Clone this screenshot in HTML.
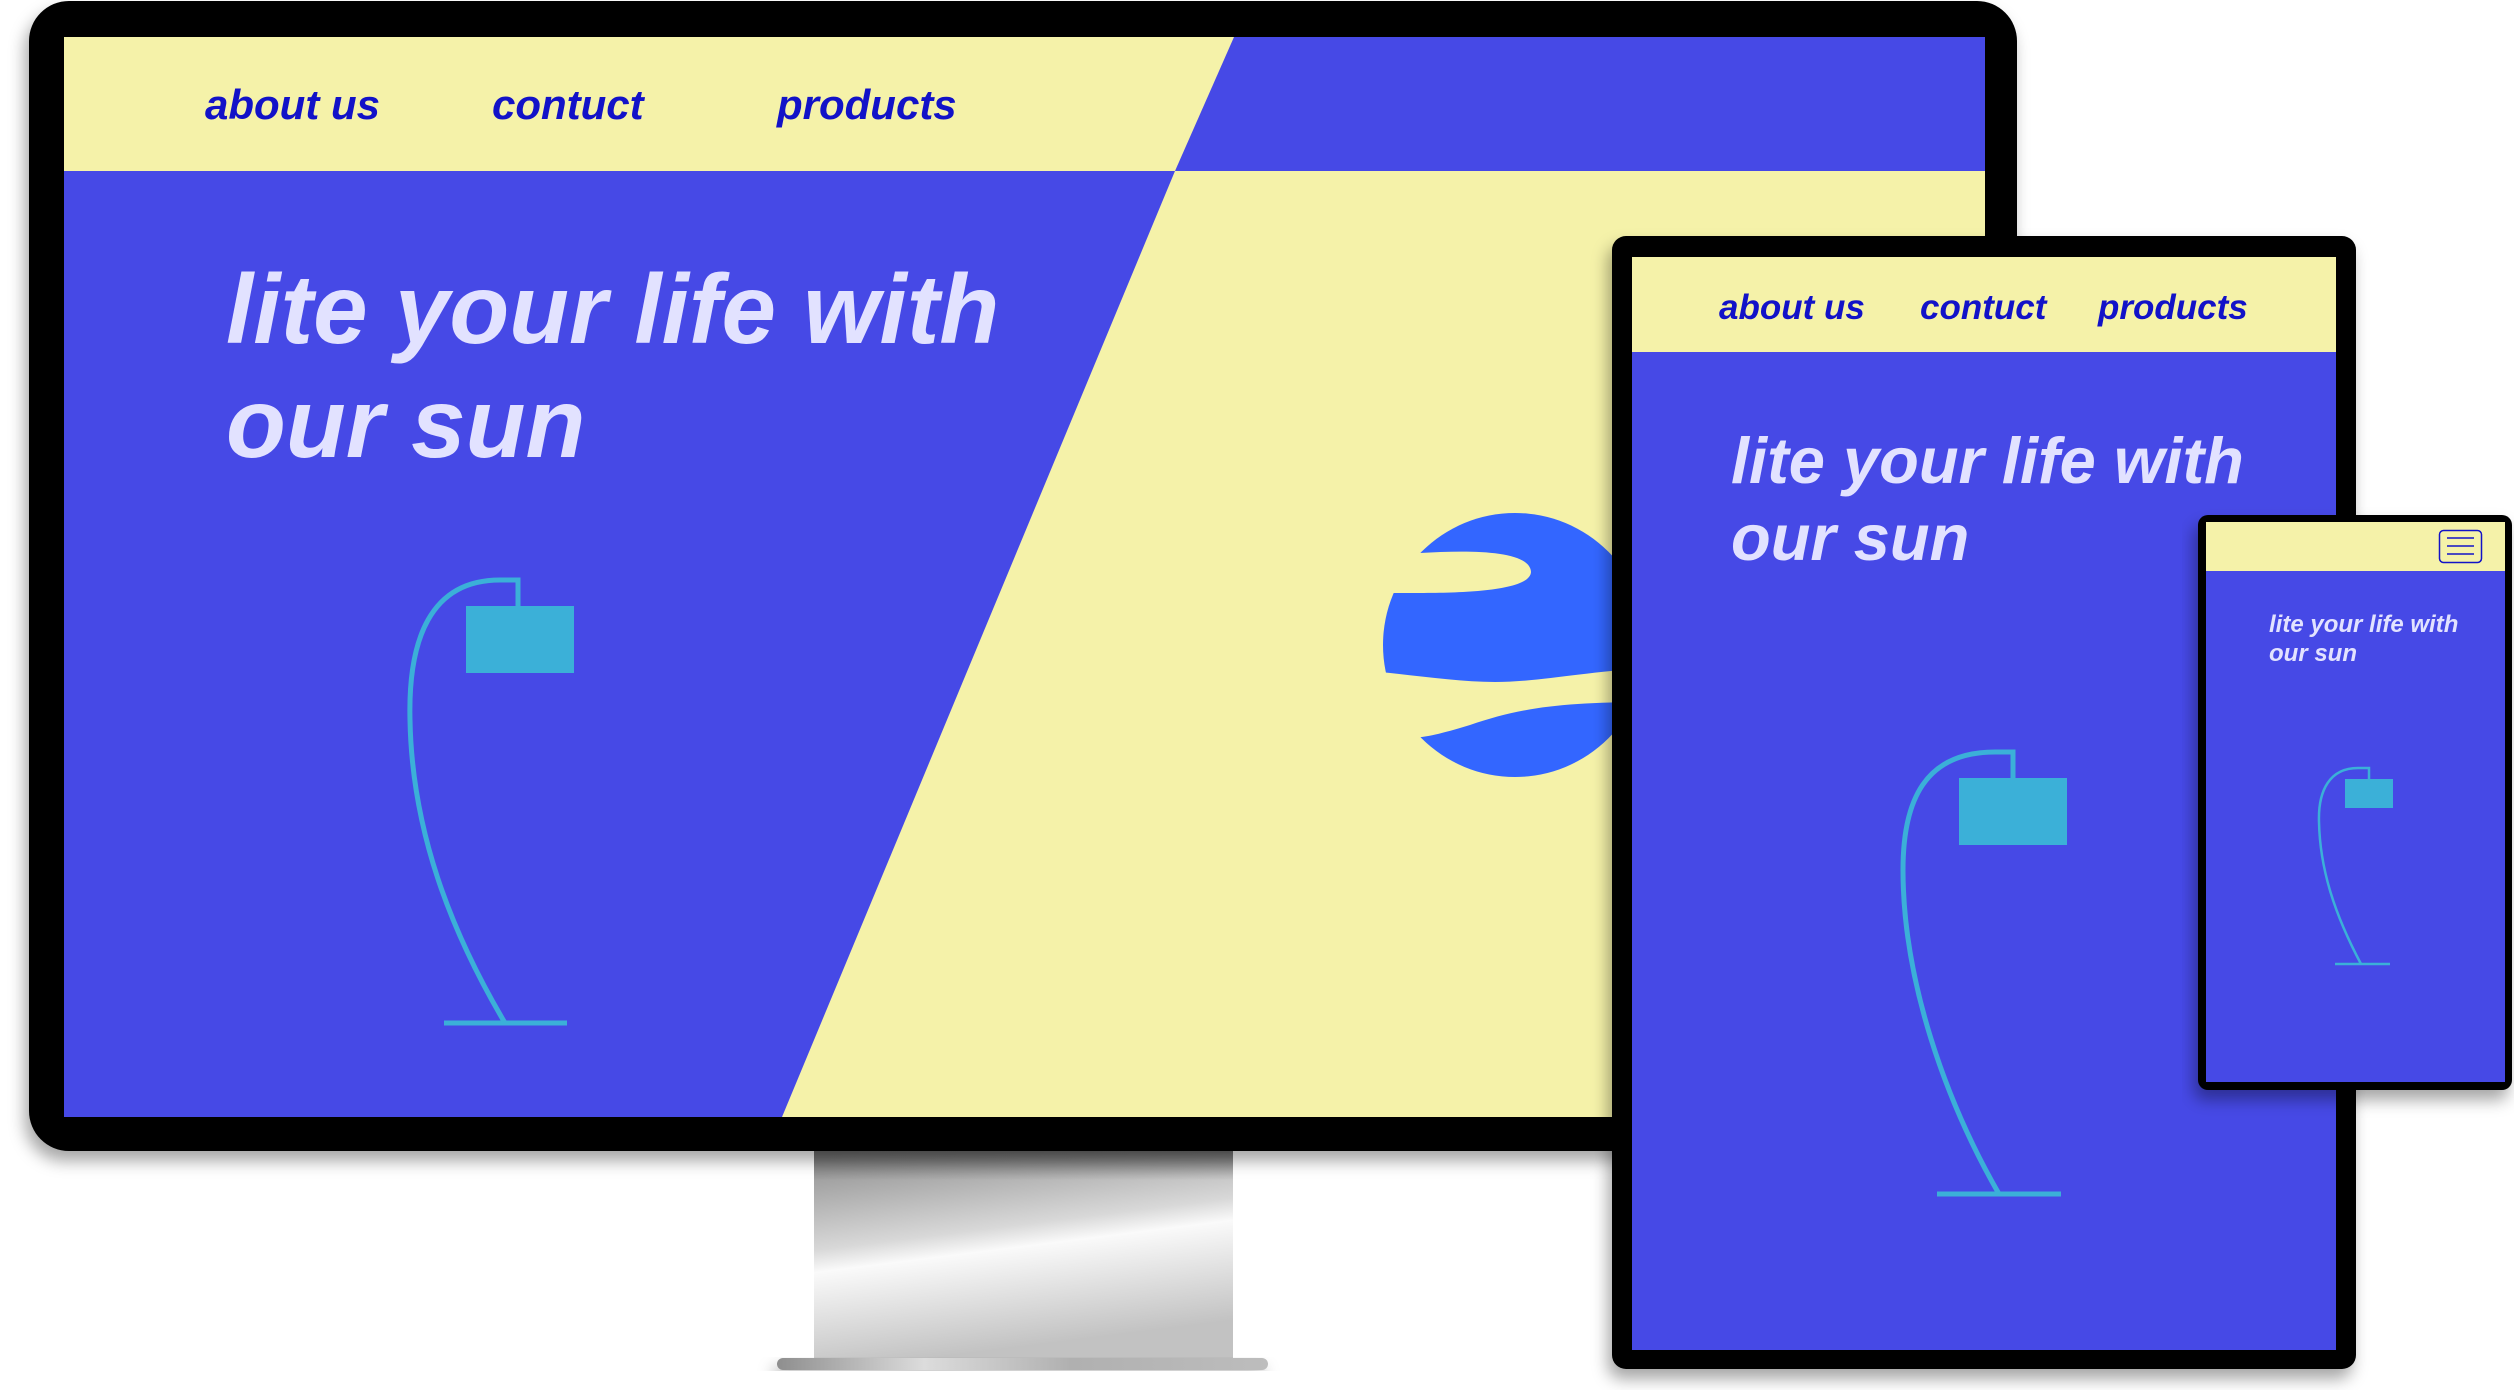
<!DOCTYPE html>
<html><head><meta charset="utf-8"><style>
html,body{margin:0;padding:0;background:#fff;}
body{width:2514px;height:1390px;position:relative;overflow:hidden;font-family:"Liberation Sans",sans-serif;}
.t{position:absolute;white-space:nowrap;font-style:italic;font-weight:bold;line-height:1;}
.nav{color:#1212c8;}
.hero{color:#e2e2ff;}
</style></head><body>
<svg width="2514" height="1390" style="position:absolute;left:0;top:0">
<defs>
<linearGradient id="st" x1="0" y1="0" x2="0.25" y2="1">
<stop offset="0" stop-color="#8a8a8a"/><stop offset="0.45" stop-color="#d8d8d8"/><stop offset="0.55" stop-color="#fafafa"/><stop offset="1" stop-color="#c2c2c2"/>
</linearGradient>
<linearGradient id="sh" x1="0" y1="0" x2="0" y2="1"><stop offset="0" stop-color="#666" stop-opacity="0.9"/><stop offset="1" stop-color="#666" stop-opacity="0"/></linearGradient>
<linearGradient id="bs" x1="0" y1="0" x2="1" y2="0"><stop offset="0" stop-color="#8e8e8e"/><stop offset="0.3" stop-color="#dcdcdc"/><stop offset="0.6" stop-color="#b0b0b0"/><stop offset="1" stop-color="#bdbdbd"/></linearGradient>
<filter id="ds" x="-5%" y="-5%" width="110%" height="110%"><feDropShadow dx="-4" dy="10" stdDeviation="8" flood-color="#000" flood-opacity="0.35"/></filter>
</defs>
<rect x="814" y="1150" width="419" height="210" fill="url(#st)"/>
<rect x="814" y="1150" width="419" height="30" fill="url(#sh)"/>
<rect x="777" y="1358" width="491" height="12" rx="6" fill="url(#bs)" filter="url(#ds)"/>
<rect x="29" y="1" width="1988" height="1150" rx="40" fill="#000" filter="url(#ds)"/>
<rect x="64" y="37" width="1921" height="1080" fill="#4649e6"/>
<polygon points="64,37 1234,37 1175,171 64,171" fill="#f5f2a9"/>
<polygon points="1175,171 1985,171 1985,1117 782,1117" fill="#f5f2a9"/>
<rect x="466" y="606" width="108" height="67" fill="#3bb0d8"/>
<path d="M518 606 V580 H500 C430 580 408 640 410 720 C412 830 450 930 505 1023" fill="none" stroke="#3bb0d8" stroke-width="5"/>
<line x1="444" y1="1023" x2="567" y2="1023" stroke="#3bb0d8" stroke-width="5"/>
<circle cx="1515" cy="645" r="132" fill="#3366ff"/>
<path d="M1380 553 L1420 553 C1470 550 1530 550 1531 572 C1530 590 1470 593 1420 593 L1380 593 Z" fill="#f5f2a9"/>
<path d="M1380 672 C1420 676 1460 682 1495 682 C1540 682 1580 672 1650 668 L1650 702 C1560 702 1520 708 1470 725 C1440 734 1428 737 1410 738 L1380 738 Z" fill="#f5f2a9"/>
<rect x="1612" y="236" width="744" height="1133" rx="14" fill="#000" filter="url(#ds)"/>
<rect x="1632" y="257" width="704" height="1093" fill="#4649e6"/>
<rect x="1632" y="257" width="704" height="95" fill="#f5f2a9"/>
<rect x="1959" y="778" width="108" height="67" fill="#3bb0d8"/>
<path d="M2013 778 V752 H1995 C1925 752 1903 800 1903 870 C1903 980 1945 1100 1999 1194" fill="none" stroke="#3bb0d8" stroke-width="5"/>
<line x1="1937" y1="1194" x2="2061" y2="1194" stroke="#3bb0d8" stroke-width="5"/>
<rect x="2198" y="515" width="314" height="575" rx="10" fill="#000" filter="url(#ds)"/>
<rect x="2206" y="522" width="299" height="560" fill="#4649e6"/>
<rect x="2206" y="522" width="299" height="49" fill="#f5f2a9"/>
<rect x="2439.5" y="530.5" width="42" height="32" rx="4" fill="none" stroke="#1212c8" stroke-width="1.5"/>
<g stroke="#1212c8" stroke-width="1.5"><line x1="2447" y1="538" x2="2474" y2="538"/><line x1="2447" y1="546" x2="2474" y2="546"/><line x1="2447" y1="554" x2="2474" y2="554"/></g>
<rect x="2345" y="779" width="48" height="29" fill="#3bb0d8"/>
<path d="M2369 779 V768 H2358 C2330 768 2318 790 2319 822 C2320 870 2335 915 2361 964" fill="none" stroke="#3bb0d8" stroke-width="2.5"/>
<line x1="2335" y1="964" x2="2390" y2="964" stroke="#3bb0d8" stroke-width="2.5"/>
</svg>
<div class="t nav" style="left:205px;top:84px;font-size:42px">about us</div>
<div class="t nav" style="left:492px;top:84px;font-size:42px">contuct</div>
<div class="t nav" style="left:777px;top:84px;font-size:42px">products</div>
<div class="t hero" style="left:226px;top:260px;font-size:98px">lite your life with</div>
<div class="t hero" style="left:226px;top:374px;font-size:98px">our sun</div>
<div class="t nav" style="left:1719px;top:290px;font-size:35px">about us</div>
<div class="t nav" style="left:1920px;top:290px;font-size:35px">contuct</div>
<div class="t nav" style="left:2098px;top:290px;font-size:35px">products</div>
<div class="t hero" style="left:1731px;top:428px;font-size:65px">lite your life with</div>
<div class="t hero" style="left:1731px;top:505px;font-size:65px">our sun</div>
<div class="t hero" style="left:2269px;top:613px;font-size:24px">lite your life with</div>
<div class="t hero" style="left:2269px;top:642px;font-size:24px">our sun</div>
</body></html>
